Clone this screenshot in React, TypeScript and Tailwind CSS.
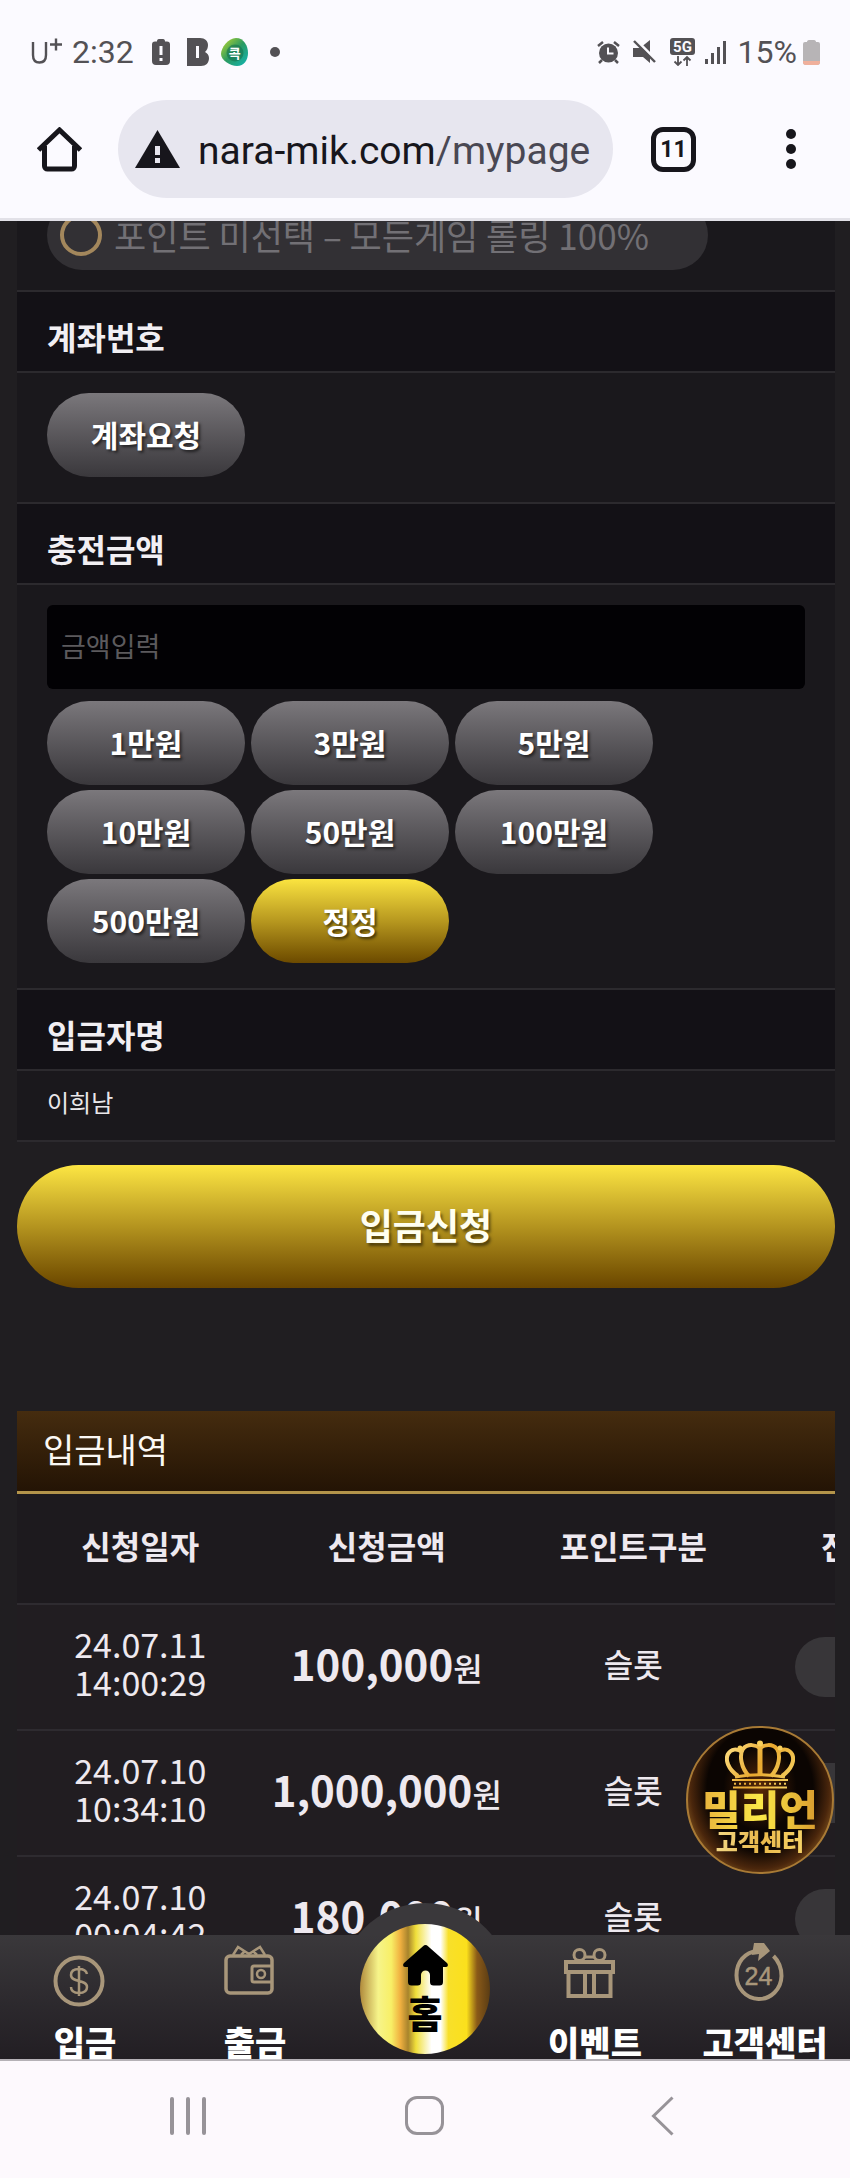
import React from 'react';

type DepositRow = {
  date: string;
  time: string;
  amount: string;
  kind: string;
};

const AMOUNTS = ['1만원', '3만원', '5만원', '10만원', '50만원', '100만원', '500만원'];

const HISTORY: DepositRow[] = [
  { date: '24.07.11', time: '14:00:29', amount: '100,000', kind: '슬롯' },
  { date: '24.07.10', time: '10:34:10', amount: '1,000,000', kind: '슬롯' },
  { date: '24.07.10', time: '00:04:42', amount: '180,000', kind: '슬롯' },
];

const pill =
  'h-[84px] w-[198px] rounded-full pb-0.5 text-[30px] font-bold text-white [text-shadow:2px_2px_3px_rgba(0,0,0,0.6)]';
const greyPill = `${pill} bg-linear-to-b from-[#7b787c] to-[#3a383c]`;
const goldPill = `${pill} bg-linear-to-b from-[#fbe440] via-[#b7981f] to-[#6c4a00]`;

const StatusBar: React.FC = () => (
  <div className="flex h-[100px] items-center justify-between pt-1 pr-[30px] pl-[31px] font-[Roboto,sans-serif] text-[32px] text-[#535155]">
    <div className="flex items-center">
      <svg width="32" height="30" viewBox="0 0 32 30" fill="none" stroke="currentColor" strokeWidth="2.4">
        <path d="M2 5v13c0 5 2.500 7.500 6.500 7.500S15 23 15 18V5M19 7.500h12M25 1.500v12" />
      </svg>
      <span className="ml-[9px]">2:32</span>
      <svg className="ml-[18px]" width="18" height="26" viewBox="0 0 18 26">
        <path d="M5 2.500C5 1 5.500 0 7 0h4c1.500 0 2 1 2 2.500h2a3 3 0 0 1 3 3V22a4 4 0 0 1-4 4H4a4 4 0 0 1-4-4V5.500a3 3 0 0 1 3-3z" fill="currentColor" />
        <path d="M7.500 7h3v9h-3zM7.500 19h3v3h-3z" fill="#fbfaff" />
      </svg>
      <svg className="ml-[17px]" width="22" height="28" viewBox="0 0 22 28">
        <path d="M0 0h13c5 0 8 3 8 7 0 3-1 5-3 7 2 1 4 3 4 6 0 5-3 8-8 8H0z" fill="currentColor" />
        <path d="M9 8h3v12H9z" fill="#fbfaff" />
      </svg>
      <span className="relative ml-3 flex size-7 items-center justify-center">
        <svg className="absolute inset-0" width="28" height="28" viewBox="0 0 28 28">
          <defs>
            <linearGradient id="app" x1="0" y1="0" x2="1" y2="1">
              <stop offset="0" stopColor="#c3da2a" />
              <stop offset="0.500" stopColor="#2a9a62" />
              <stop offset="1" stopColor="#12b5b5" />
            </linearGradient>
          </defs>
          <path d="M15 0c8 0 12 8 12 15s-4 13-11 13S0 22 0 16 7 0 15 0z" fill="url(#app)" />
          <circle cx="14" cy="15" r="8.500" fill="#14724f" opacity="0.600" />
        </svg>
        <span className="relative font-['Noto_Sans_CJK_KR',sans-serif] text-[13px] leading-none font-bold text-white">콕</span>
      </span>
      <span className="ml-[21px] size-[10px] rounded-full bg-current" />
    </div>
    <div className="flex items-center">
      <svg width="23" height="24" viewBox="0 0 23 24" fill="none" stroke="currentColor" strokeWidth="2.500">
        <circle cx="11.500" cy="13" r="9.500" fill="currentColor" stroke="none" />
        <path d="M1 6l5-4M22 6l-5-4M5 20l-3 3M18 20l3 3" />
        <path d="M11 7.500v6h5.500" stroke="#fbfaff" strokeWidth="2" />
      </svg>
      <svg className="ml-[13px]" width="23" height="24" viewBox="0 0 23 24">
        <path d="M0 8h7l10-8v23l-7-6H0z" fill="currentColor" />
        <path d="M3 0l20 20" stroke="#fbfaff" strokeWidth="3" />
        <path d="M1 1l21 21" stroke="currentColor" strokeWidth="2.400" />
      </svg>
      <svg className="ml-[14px]" width="25" height="28" viewBox="0 0 25 28">
        <rect width="25" height="17" rx="3" fill="currentColor" />
        <text x="12.500" y="14" textAnchor="middle" fontSize="15" fontWeight="700" fill="#fbfaff">5G</text>
        <path d="M8 18v9M4.500 23.500L8 27l3.500-3.500M17 28v-9M13.500 22.500L17 19l3.500 3.500" fill="none" stroke="currentColor" strokeWidth="1.800" />
      </svg>
      <svg className="ml-[10px]" width="21" height="23" viewBox="0 0 21 23" fill="currentColor">
        <path d="M0 18h3v5H0zM6 12h3v11H6zM12 6h3v17h-3zM18 0h3v23h-3z" />
      </svg>
      <span className="ml-3">15%</span>
      <svg className="ml-[6px]" width="17" height="25" viewBox="0 0 17 25">
        <path d="M4 2c0-1 .500-2 2-2h5c1.500 0 2 1 2 2h2a2 2 0 0 1 2 2v18a3 3 0 0 1-3 3H3a3 3 0 0 1-3-3V4a2 2 0 0 1 2-2z" fill="#b7b4b6" />
        <path d="M0 21h17v1a3 3 0 0 1-3 3H3a3 3 0 0 1-3-3z" fill="#f0b09c" />
      </svg>
    </div>
  </div>
);

const BrowserBar: React.FC = () => (
  <div className="flex h-[121px] items-start border-b-[3px] border-[#e2e1e8] pr-[39px] pl-[37px] text-[#17161c]">
    <button aria-label="홈페이지" className="mt-[27px] shrink-0">
      <svg width="45" height="45" viewBox="0 0 45 45" fill="none" stroke="currentColor" strokeWidth="5" strokeLinejoin="round">
        <path d="M1.500 23L22.500 3l21 20" strokeLinejoin="miter" />
        <path d="M7.500 19v20a3 3 0 0 0 3 3h24a3 3 0 0 0 3-3V19" />
      </svg>
    </button>
    <div className="ml-9 flex h-[98px] min-w-0 flex-1 items-center rounded-full bg-[#e7e6ef] pr-3 pl-[17px]">
      <svg className="shrink-0" width="45" height="38" viewBox="0 0 45 38">
        <path d="M22.500 0L45 38H0z" fill="currentColor" />
        <path d="M20 16h5v9h-5zM20 28h5v5h-5z" fill="#e7e6ef" />
      </svg>
      <span className="ml-[18px] truncate pt-1 font-[Roboto,sans-serif] text-[39px] leading-[52px]">
        nara-mik.com<span className="text-[#4a4853]">/mypage</span>
      </span>
    </div>
    <button className="mt-[27px] ml-[38px] flex size-[45px] shrink-0 items-center justify-center rounded-xl border-[5px] border-current font-[Roboto,sans-serif] text-[23px] leading-none font-bold">
      11
    </button>
    <button aria-label="메뉴" className="mt-[29px] ml-[75px] shrink-0 px-[15px]">
      <svg width="10" height="40" viewBox="0 0 10 40" fill="currentColor">
        <circle cx="5" cy="5" r="5" />
        <circle cx="5" cy="20" r="5" />
        <circle cx="5" cy="35" r="5" />
      </svg>
    </button>
  </div>
);

const FieldTitle: React.FC<{ children: React.ReactNode }> = ({ children }) => (
  <h2 className="h-[83px] border-y-2 border-[#2c2a2e] bg-[#131116] px-[30px] pt-5 text-[32px] leading-[48px] font-bold text-[#f1eff3]">
    {children}
  </h2>
);

const DepositForm: React.FC = () => (
  <form onSubmit={(e) => e.preventDefault()}>
    <div className="border-b-2 border-[#2c2a2e] bg-[#1a181c]">
      <div className="-mt-[21px] px-[30px] pb-5">
        <label className="flex h-[70px] max-w-[661px] items-center rounded-full bg-[#323034] pl-[13px] text-[35px] text-[#727075]">
          <input
            type="radio"
            name="point"
            className="mr-3 size-[42px] shrink-0 appearance-none rounded-full border-4 border-[#a3875c]"
          />
          포인트 미선택 – 모든게임 롤링 100%
        </label>
      </div>
      <div className="-mb-0.5">
        <FieldTitle>계좌번호</FieldTitle>
        <div className="px-[30px] pt-5 pb-[25px]">
          <button type="button" className={greyPill}>계좌요청</button>
        </div>
        <FieldTitle>
          <label htmlFor="amount">충전금액</label>
        </FieldTitle>
        <div className="px-[30px] pt-5 pb-[25px]">
          <input
            id="amount"
            placeholder="금액입력"
            className="block h-[84px] w-full rounded-md bg-[#020104] px-[14px] pb-1 text-[27px] text-white placeholder:text-[#5c5a5d]"
          />
          <div className="mt-3 flex flex-wrap gap-x-1.5 gap-y-[5px]">
            {AMOUNTS.map((amount) => (
              <button key={amount} type="button" className={greyPill}>{amount}</button>
            ))}
            <button type="reset" className={goldPill}>정정</button>
          </div>
        </div>
        <FieldTitle>입금자명</FieldTitle>
        <p className="h-[71px] px-[30px] pt-[11px] text-[24px] leading-10 text-[#e9e7ea]">이희남</p>
      </div>
    </div>
    <button
      type="submit"
      className="mt-[23px] h-[123px] w-full rounded-full bg-linear-to-b from-[#fde643] via-[#b4941f] to-[#6a4600] pb-1.5 text-[36px] font-bold text-[#fffff0] [text-shadow:2px_3px_3px_rgba(0,0,0,0.5)]"
    >
      입금신청
    </button>
  </form>
);

const DepositHistory: React.FC = () => (
  <section className="mt-[123px]">
    <h2 className="h-[83px] border-b-[3px] border-[#b3944a] bg-linear-to-b from-[#452c0f] to-[#241405] px-[26px] text-[34px] leading-[76px] text-[#fbf8f4]">
      입금내역
    </h2>
    <div className="overflow-hidden">
      <table className="w-[986px] table-fixed border-collapse text-center text-[32px] text-[#eee9ef]">
        <thead>
          <tr className="h-[110px] border-b-2 border-[#2e2b30] bg-[#1d1a1e]">
            <th className="pb-2">신청일자</th>
            <th className="pb-2">신청금액</th>
            <th className="pb-2">포인트구분</th>
            <th className="pb-2">진행상태</th>
          </tr>
        </thead>
        <tbody>
          {HISTORY.map((row) => (
            <tr key={row.time} className="h-[126px] border-b-2 border-[#2e2b30] bg-[#211d21]">
              <td className="pb-2 text-[34px] leading-[38px]">
                {row.date}
                <br />
                {row.time}
              </td>
              <td className="pb-2 whitespace-nowrap">
                <strong className="text-[42px] leading-[60px]">{row.amount}</strong>
                <span className="font-medium">원</span>
              </td>
              <td className="pb-2 font-medium">{row.kind}</td>
              <td>
                <span className="mx-auto block h-[60px] w-[170px] rounded-full bg-[#383639]" />
              </td>
            </tr>
          ))}
        </tbody>
      </table>
    </div>
  </section>
);

const SupportBadge: React.FC = () => (
  <button className="absolute right-4 bottom-[61px] flex size-[148px] flex-col items-center rounded-full border-2 border-[#a87a35] bg-[radial-gradient(ellipse_at_50%_42%,#5a2a08_0%,#0b0502_36%,#0b0502_52%,#4a260c_68%,#8a5c22_80%)] pt-3">
    <svg className="shrink-0" width="70" height="49" viewBox="0 0 70 49" fill="none" stroke="url(#crown)" strokeWidth="4">
      <defs>
        <linearGradient id="crown" x1="0" y1="0" x2="70" y2="49" gradientUnits="userSpaceOnUse">
          <stop offset="0" stopColor="#ffe38a" />
          <stop offset="0.500" stopColor="#e9a92f" />
          <stop offset="1" stopColor="#f7d76a" />
        </linearGradient>
      </defs>
      <path d="M13 36C3 29 0 20 3 14c3-5 9-6 14-2M57 36c10-7 13-16 10-22-3-5-9-6-14-2" />
      <path d="M24 36C16 28 14 15 18 9c5-6 13-4 17-1 4-3 12-5 17 1 4 6 2 19-6 27" />
      <path d="M35 8v28" strokeWidth="5" />
      <path d="M10 37c16-3 34-3 50 0" strokeWidth="3" />
      <circle cx="35" cy="3.500" r="3" fill="#f8cf5c" stroke="none" />
      <circle cx="15" cy="8" r="2.500" fill="#f8cf5c" stroke="none" />
      <circle cx="55" cy="8" r="2.500" fill="#f8cf5c" stroke="none" />
      <path d="M7 40h56M8 47.500h54" strokeWidth="2" />
      <path d="M9 43.800h53" strokeWidth="2" strokeDasharray="2 3" />
    </svg>
    <span className="-mt-0.5 bg-linear-to-r from-[#e9b33c] via-[#fbe948] to-[#d79a2e] bg-clip-text text-[42px] leading-[42px] font-black text-transparent">
      밀리언
    </span>
    <span className="bg-linear-to-r from-[#f3d884] via-[#e9b84a] to-[#f6d368] bg-clip-text text-[24px] leading-6 font-black text-transparent">
      고객센터
    </span>
  </button>
);

const tab = 'flex flex-col items-center justify-end';
const tabIcon = 'mr-3 shrink-0 text-[#a8967a]';
const tabLabel = 'text-[34px] leading-[34px] font-black whitespace-nowrap text-white';

const TabBar: React.FC = () => (
  <nav className="relative z-10 grid h-[124px] shrink-0 grid-cols-5 grid-rows-1 bg-linear-to-b from-[#3a383b] to-[#221e23]">
    <a href="#deposit" className={tab}>
      <svg className={tabIcon} width="52" height="70" viewBox="0 0 52 70" fill="none" stroke="currentColor" strokeWidth="4">
        <circle cx="26" cy="26" r="23.500" />
        <path d="M34 19c-1-4-4-5-8-5-5 0-8 2-8 6 0 8 16 4 16 12 0 4-3 6-8 6s-8-2-8-6M26 11v30" strokeWidth="2.500" />
      </svg>
      <span className={tabLabel}>입금</span>
    </a>
    <a href="#withdraw" className={tab}>
      <svg className={tabIcon} width="50" height="80" viewBox="0 0 50 80" fill="none" stroke="currentColor" strokeWidth="3.500">
        <rect x="2" y="11" width="46" height="37" rx="4" />
        <path d="M9 10l5-8 11 7 11-7 5 8M17 10l4-4M33 10l-4-4" strokeWidth="2.500" />
        <path d="M48 21H30a2 2 0 0 0-2 2v12a2 2 0 0 0 2 2h18" strokeWidth="3" />
        <circle cx="37" cy="29" r="4" strokeWidth="2.500" />
      </svg>
      <span className={tabLabel}>출금</span>
    </a>
    <a href="#home" className="relative">
      <span className="absolute -bottom-4 left-1/2 size-[172px] -translate-x-1/2 rounded-full bg-[#3a383b] [clip-path:inset(0_0_139px_0)]" />
      <span className="absolute bottom-[5px] left-1/2 flex size-[130px] -translate-x-1/2 flex-col items-center rounded-full bg-[linear-gradient(90deg,#b08a3c_0%,#f6f48a_14%,#f8ef66_24%,#f0b040_31%,#a8842c_37%,#f0df3a_43%,#ffffff_55%,#ffffff_62%,#f8e02a_68%,#fbe01c_82%,#8a5a18_90%,#5a3c14_100%)] pt-[21px] text-black">
        <svg width="45" height="41" viewBox="0 0 45 41" fill="currentColor">
          <path d="M20 1.200c1.500-1.500 3.500-1.500 5 0L44 18c1.500 1.500 1 4-1 4h-3v15a3.500 3.500 0 0 1-3.500 3.500h-6A3.500 3.500 0 0 1 27 37v-7a4.500 4.500 0 0 0-9 0v7a3.500 3.500 0 0 1-3.500 3.500h-6A3.500 3.500 0 0 1 5 37V22H2c-2 0-2.500-2.500-1-4z" />
        </svg>
        <span className="mt-1.5 text-[38px] leading-10 font-black">홈</span>
      </span>
    </a>
    <a href="#event" className={tab}>
      <svg className={tabIcon} width="51" height="78" viewBox="0 0 51 78" fill="none" stroke="currentColor" strokeWidth="4">
        <rect x="2" y="15" width="47" height="10" />
        <path d="M4.500 25v24h42V25M21 25v24M30 25v24" />
        <circle cx="15.500" cy="8" r="5.500" strokeWidth="3" />
        <circle cx="35.500" cy="8" r="5.500" strokeWidth="3" />
        <path d="M21 10h9" strokeWidth="3" />
      </svg>
      <span className={tabLabel}>이벤트</span>
    </a>
    <a href="#support" className={tab}>
      <svg className={tabIcon} width="50" height="82" viewBox="0 0 50 82" fill="none" stroke="currentColor" strokeWidth="4">
        <path d="M24 8C10 9 2.500 20 2.500 32a22.500 23.500 0 0 0 45 1c0-8-3-15-8-20" />
        <path d="M20 0h10l6 8-12 10 1-7-7 1z" fill="currentColor" stroke="none" />
        <text x="24.500" y="42" textAnchor="middle" fontSize="25" fontFamily="Liberation Sans" fill="currentColor" stroke="currentColor" strokeWidth="0.500">24</text>
      </svg>
      <span className={tabLabel}>고객센터</span>
    </a>
  </nav>
);

const SystemNav: React.FC = () => (
  <div className="grid h-[119px] shrink-0 grid-cols-3 items-center justify-items-center border-t-2 border-[#b5b1b6] bg-[#fdf9fd] px-[69px] pb-2 text-[#979398]">
    <button aria-label="최근 앱">
      <svg width="36" height="38" viewBox="0 0 36 38" stroke="currentColor" strokeWidth="4" strokeLinecap="round">
        <path d="M2 2v34M18 2v34M34 2v34" />
      </svg>
    </button>
    <button aria-label="홈 화면" className="size-[39px] rounded-xl border-[3px] border-current" />
    <button aria-label="뒤로">
      <svg width="23" height="40" viewBox="0 0 23 40" fill="none" stroke="currentColor" strokeWidth="3">
        <path d="M21.500 1.500L2.500 20l19 18.500" />
      </svg>
    </button>
  </div>
);

export default function App() {
  return (
    <div className="flex h-screen flex-col bg-[#fbfaff] font-['Noto_Sans_CJK_KR',sans-serif]">
      <header className="shrink-0">
        <StatusBar />
        <BrowserBar />
      </header>
      <div className="relative min-h-0 flex-1 bg-[#201e21]">
        <main className="h-full overflow-hidden pr-[15px] pl-[17px]">
          <DepositForm />
          <DepositHistory />
        </main>
        <SupportBadge />
      </div>
      <TabBar />
      <SystemNav />
    </div>
  );
}
